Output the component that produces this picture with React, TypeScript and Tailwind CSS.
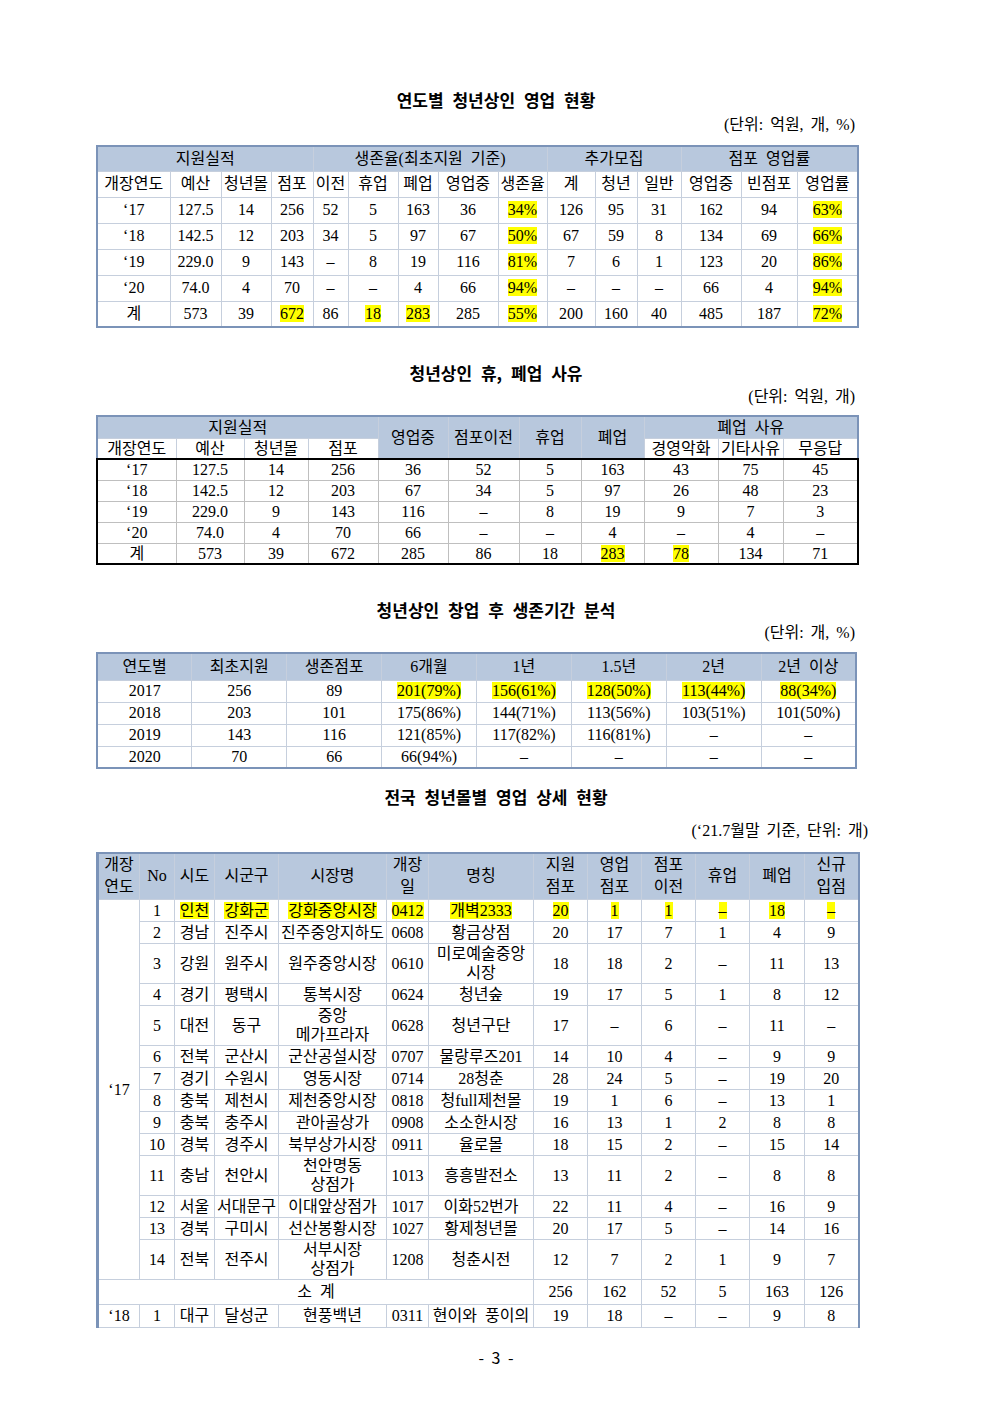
import React from "react";

const body = "font-['Liberation_Serif','Noto_Sans_CJK_KR',serif]";
const titleFont = "font-['Noto_Sans_CJK_KR',sans-serif]";

// "!" prefix = yellow highlight, "\n" = line break
const Txt = ({ v }: { v: string }) => {
	const hl = v.startsWith("!");
	const text = hl ? v.slice(1) : v;
	const parts = text.split("\n");
	const inner = parts.map((p, i) => (
		<React.Fragment key={i}>
			{i > 0 && <br />}
			{p}
		</React.Fragment>
	));
	return hl ? <span className="bg-[#ffff00]">{inner}</span> : <>{inner}</>;
};

const Title = ({ children, className = "" }: { children: React.ReactNode; className?: string }) => (
	<div className={`h-[22px] leading-[22px] text-center text-[17px] font-bold [word-spacing:5px] ${titleFont} ${className}`}>
		{children}
	</div>
);

const Unit = ({ children, className = "" }: { children: React.ReactNode; className?: string }) => (
	<div className={`ml-[96px] h-[22px] leading-[22px] text-right text-[16px] [word-spacing:3px] ${className}`}>
		{children}
	</div>
);

const t1Rows = [
	["‘17", "127.5", "14", "256", "52", "5", "163", "36", "!34%", "126", "95", "31", "162", "94", "!63%"],
	["‘18", "142.5", "12", "203", "34", "5", "97", "67", "!50%", "67", "59", "8", "134", "69", "!66%"],
	["‘19", "229.0", "9", "143", "–", "8", "19", "116", "!81%", "7", "6", "1", "123", "20", "!86%"],
	["‘20", "74.0", "4", "70", "–", "–", "4", "66", "!94%", "–", "–", "–", "66", "4", "!94%"],
	["계", "573", "39", "!672", "86", "!18", "!283", "285", "!55%", "200", "160", "40", "485", "187", "!72%"],
];
const t1Labels = ["개장연도", "예산", "청년몰", "점포", "이전", "휴업", "폐업", "영업중", "생존율", "계", "청년", "일반", "영업중", "빈점포", "영업률"];

const Table1 = () => {
	const c = "border border-[#c6cfdd] p-0 font-normal whitespace-nowrap";
	return (
		<table className="w-[761px] table-fixed border-collapse border-2 border-[#7b93b8] text-center text-[16px] leading-[20px] [word-spacing:4px]">
			<colgroup>
				<col className="w-[73px]" />
				<col className="w-[51px]" />
				<col className="w-[50px]" />
				<col className="w-[42px]" />
				<col className="w-[35px]" />
				<col className="w-[50px]" />
				<col className="w-[40px]" />
				<col className="w-[60px]" />
				<col className="w-[49px]" />
				<col className="w-[48px]" />
				<col className="w-[42px]" />
				<col className="w-[44px]" />
				<col className="w-[60px]" />
				<col className="w-[56px]" />
				<col className="w-[61px]" />
			</colgroup>
			<thead>
				<tr className="h-[25px] bg-[#b8c8dd]">
					<th colSpan={4} className={c}>지원실적</th>
					<th colSpan={5} className={c}>생존율(최초지원 기준)</th>
					<th colSpan={3} className={c}>추가모집</th>
					<th colSpan={3} className={c}>점포 영업률</th>
				</tr>
				<tr className="h-[26px]">
					{t1Labels.map((l, i) => (
						<th key={i} className={c}>{l}</th>
					))}
				</tr>
			</thead>
			<tbody>
				{t1Rows.map((r, i) => (
					<tr key={i} className="h-[26px]">
						{r.map((v, j) => (
							<td key={j} className={c}><Txt v={v} /></td>
						))}
					</tr>
				))}
			</tbody>
		</table>
	);
};

const t2Rows = [
	["‘17", "127.5", "14", "256", "36", "52", "5", "163", "43", "75", "45"],
	["‘18", "142.5", "12", "203", "67", "34", "5", "97", "26", "48", "23"],
	["‘19", "229.0", "9", "143", "116", "–", "8", "19", "9", "7", "3"],
	["‘20", "74.0", "4", "70", "66", "–", "–", "4", "–", "4", "–"],
	["계", "573", "39", "672", "285", "86", "18", "!283", "!78", "134", "71"],
];

const Table2 = () => {
	const h = "border border-[#c6cfdd] p-0 font-normal whitespace-nowrap";
	const sub = `${h} border-b-2 border-b-black`;
	return (
		<table className="w-[761px] table-fixed border-collapse border-2 border-[#7b93b8] text-center text-[16px] leading-[19px] [word-spacing:4px]">
			<colgroup>
				<col className="w-[79px]" />
				<col className="w-[68px]" />
				<col className="w-[64px]" />
				<col className="w-[70px]" />
				<col className="w-[70px]" />
				<col className="w-[71px]" />
				<col className="w-[62px]" />
				<col className="w-[63px]" />
				<col className="w-[74px]" />
				<col className="w-[65px]" />
				<col className="w-[75px]" />
			</colgroup>
			<thead>
				<tr className="h-[22px]">
					<th colSpan={4} className={`${h} bg-[#b8c8dd]`}>지원실적</th>
					<th rowSpan={2} className={`${h} bg-[#b8c8dd] border-b-2 border-b-black`}>영업중</th>
					<th rowSpan={2} className={`${h} bg-[#b8c8dd] border-b-2 border-b-black`}>점포이전</th>
					<th rowSpan={2} className={`${h} bg-[#b8c8dd] border-b-2 border-b-black`}>휴업</th>
					<th rowSpan={2} className={`${h} bg-[#b8c8dd] border-b-2 border-b-black`}>폐업</th>
					<th colSpan={3} className={`${h} bg-[#b8c8dd]`}>폐업 사유</th>
				</tr>
				<tr className="h-[21px]">
					<th className={sub}>개장연도</th>
					<th className={sub}>예산</th>
					<th className={sub}>청년몰</th>
					<th className={sub}>점포</th>
					<th className={sub}>경영악화</th>
					<th className={sub}>기타사유</th>
					<th className={sub}>무응답</th>
				</tr>
			</thead>
			<tbody>
				{t2Rows.map((r, i) => (
					<tr key={i} className="h-[21px]">
						{r.map((v, j) => {
							let c = "border border-[#bfbfbf] p-0 whitespace-nowrap";
							if (j === 0) c += " border-l-2 border-l-black";
							if (j === r.length - 1) c += " border-r-2 border-r-black";
							if (i === t2Rows.length - 1) c += " border-b-2 border-b-black";
							return (
								<td key={j} className={c}><Txt v={v} /></td>
							);
						})}
					</tr>
				))}
			</tbody>
		</table>
	);
};

const t3Labels = ["연도별", "최초지원", "생존점포", "6개월", "1년", "1.5년", "2년", "2년 이상"];
const t3Rows = [
	["2017", "256", "89", "!201(79%)", "!156(61%)", "!128(50%)", "!113(44%)", "!88(34%)"],
	["2018", "203", "101", "175(86%)", "144(71%)", "113(56%)", "103(51%)", "101(50%)"],
	["2019", "143", "116", "121(85%)", "117(82%)", "116(81%)", "–", "–"],
	["2020", "70", "66", "66(94%)", "–", "–", "–", "–"],
];

const Table3 = () => {
	const c = "border border-[#c6cfdd] p-0 font-normal whitespace-nowrap";
	return (
		<table className="w-[761px] table-fixed border-collapse border-2 border-[#7b93b8] text-center text-[16px] leading-[20px] [word-spacing:4px]">
			<thead>
				<tr className="h-[27px] bg-[#b8c8dd]">
					{t3Labels.map((l, i) => (
						<th key={i} className={c}>{l}</th>
					))}
				</tr>
			</thead>
			<tbody>
				{t3Rows.map((r, i) => (
					<tr key={i} className="h-[22px]">
						{r.map((v, j) => (
							<td key={j} className={c}><Txt v={v} /></td>
						))}
					</tr>
				))}
			</tbody>
		</table>
	);
};

type Row4 = { c: string[]; tall?: boolean };
const t4Rows: Row4[] = [
	{ c: ["1", "!인천", "!강화군", "!강화중앙시장", "!0412", "!개벽2333", "!20", "!1", "!1", "!–", "!18", "!–"] },
	{ c: ["2", "경남", "진주시", "진주중앙지하도", "0608", "황금상점", "20", "17", "7", "1", "4", "9"] },
	{ c: ["3", "강원", "원주시", "원주중앙시장", "0610", "미로예술중앙\n시장", "18", "18", "2", "–", "11", "13"], tall: true },
	{ c: ["4", "경기", "평택시", "통복시장", "0624", "청년숲", "19", "17", "5", "1", "8", "12"] },
	{ c: ["5", "대전", "동구", "중앙\n메가프라자", "0628", "청년구단", "17", "–", "6", "–", "11", "–"], tall: true },
	{ c: ["6", "전북", "군산시", "군산공설시장", "0707", "물랑루즈201", "14", "10", "4", "–", "9", "9"] },
	{ c: ["7", "경기", "수원시", "영동시장", "0714", "28청춘", "28", "24", "5", "–", "19", "20"] },
	{ c: ["8", "충북", "제천시", "제천중앙시장", "0818", "청full제천몰", "19", "1", "6", "–", "13", "1"] },
	{ c: ["9", "충북", "충주시", "관아골상가", "0908", "소소한시장", "16", "13", "1", "2", "8", "8"] },
	{ c: ["10", "경북", "경주시", "북부상가시장", "0911", "율로몰", "18", "15", "2", "–", "15", "14"] },
	{ c: ["11", "충남", "천안시", "천안명동\n상점가", "1013", "흥흥발전소", "13", "11", "2", "–", "8", "8"], tall: true },
	{ c: ["12", "서울", "서대문구", "이대앞상점가", "1017", "이화52번가", "22", "11", "4", "–", "16", "9"] },
	{ c: ["13", "경북", "구미시", "선산봉황시장", "1027", "황제청년몰", "20", "17", "5", "–", "14", "16"] },
	{ c: ["14", "전북", "전주시", "서부시장\n상점가", "1208", "청춘시전", "12", "7", "2", "1", "9", "7"], tall: true },
];
const t4Labels = ["개장\n연도", "No", "시도", "시군구", "시장명", "개장\n일", "명칭", "지원\n점포", "영업\n점포", "점포\n이전", "휴업", "폐업", "신규\n입점"];

const Table4 = () => {
	const c = "border border-[#c6cfdd] p-0 font-normal whitespace-nowrap";
	return (
		<table className="w-[761px] table-fixed border-collapse border-2 border-l-[3px] border-b border-[#7b93b8] border-b-[#c6cfdd] text-center text-[16px] leading-[19px] [word-spacing:4px]">
			<colgroup>
				<col className="w-[42px]" />
				<col className="w-[35px]" />
				<col className="w-[40px]" />
				<col className="w-[64px]" />
				<col className="w-[108px]" />
				<col className="w-[42px]" />
				<col className="w-[105px]" />
				<col className="w-[54px]" />
				<col className="w-[54px]" />
				<col className="w-[54px]" />
				<col className="w-[54px]" />
				<col className="w-[55px]" />
				<col className="w-[54px]" />
			</colgroup>
			<thead>
				<tr className="h-[46px] bg-[#b8c8dd] leading-[22px]">
					{t4Labels.map((l, i) => (
						<th key={i} className={c}><Txt v={l} /></th>
					))}
				</tr>
			</thead>
			<tbody>
				{t4Rows.map((r, i) => (
					<tr key={i} className={r.tall ? "h-[40px]" : "h-[22px]"}>
						{i === 0 && (
							<td rowSpan={t4Rows.length} className={c}>‘17</td>
						)}
						{r.c.map((v, j) => (
							<td key={j} className={c}><Txt v={v} /></td>
						))}
					</tr>
				))}
				<tr className="h-[25px]">
					<td colSpan={7} className={c}>소 계</td>
					<td className={c}>256</td>
					<td className={c}>162</td>
					<td className={c}>52</td>
					<td className={c}>5</td>
					<td className={c}>163</td>
					<td className={c}>126</td>
				</tr>
				<tr className="h-[23px]">
					{["‘18", "1", "대구", "달성군", "현풍백년", "0311", "현이와 풍이의", "19", "18", "–", "–", "9", "8"].map((v, j) => (
						<td key={j} className={c}>{v}</td>
					))}
				</tr>
			</tbody>
		</table>
	);
};

export default function App() {
	return (
		<div className={`w-[992px] h-[1403px] bg-white text-black ${body}`}>
			<div className="pt-[89px]">
				<Title>연도별 청년상인 영업 현황</Title>
				<Unit className="mt-[3px] w-[759px]">(단위: 억원, 개, %)</Unit>
				<div className="ml-[96px] mt-[9px]">
					<Table1 />
				</div>

				<Title className="mt-[34px]">청년상인 휴, 폐업 사유</Title>
				<Unit className="mt-[2px] w-[759px]">(단위: 억원, 개)</Unit>
				<div className="ml-[96px] mt-[7px]">
					<Table2 />
				</div>

				<Title className="mt-[34px]">청년상인 창업 후 생존기간 분석</Title>
				<Unit className="mt-[1px] w-[759px]">(단위: 개, %)</Unit>
				<div className="ml-[96px] mt-[8px]">
					<Table3 />
				</div>

				<Title className="mt-[17px]">전국 청년몰별 영업 상세 현황</Title>
				<Unit className="mt-[12px] w-[772px]">(‘21.7월말 기준, 단위: 개)</Unit>
				<div className="ml-[96px] mt-[10px]">
					<Table4 />
				</div>

				<div className="mt-[18px] h-[22px] leading-[22px] text-center text-[16px] font-['Noto_Sans_CJK_KR',sans-serif] [word-spacing:4px]">
					- 3 -
				</div>
			</div>
		</div>
	);
}
